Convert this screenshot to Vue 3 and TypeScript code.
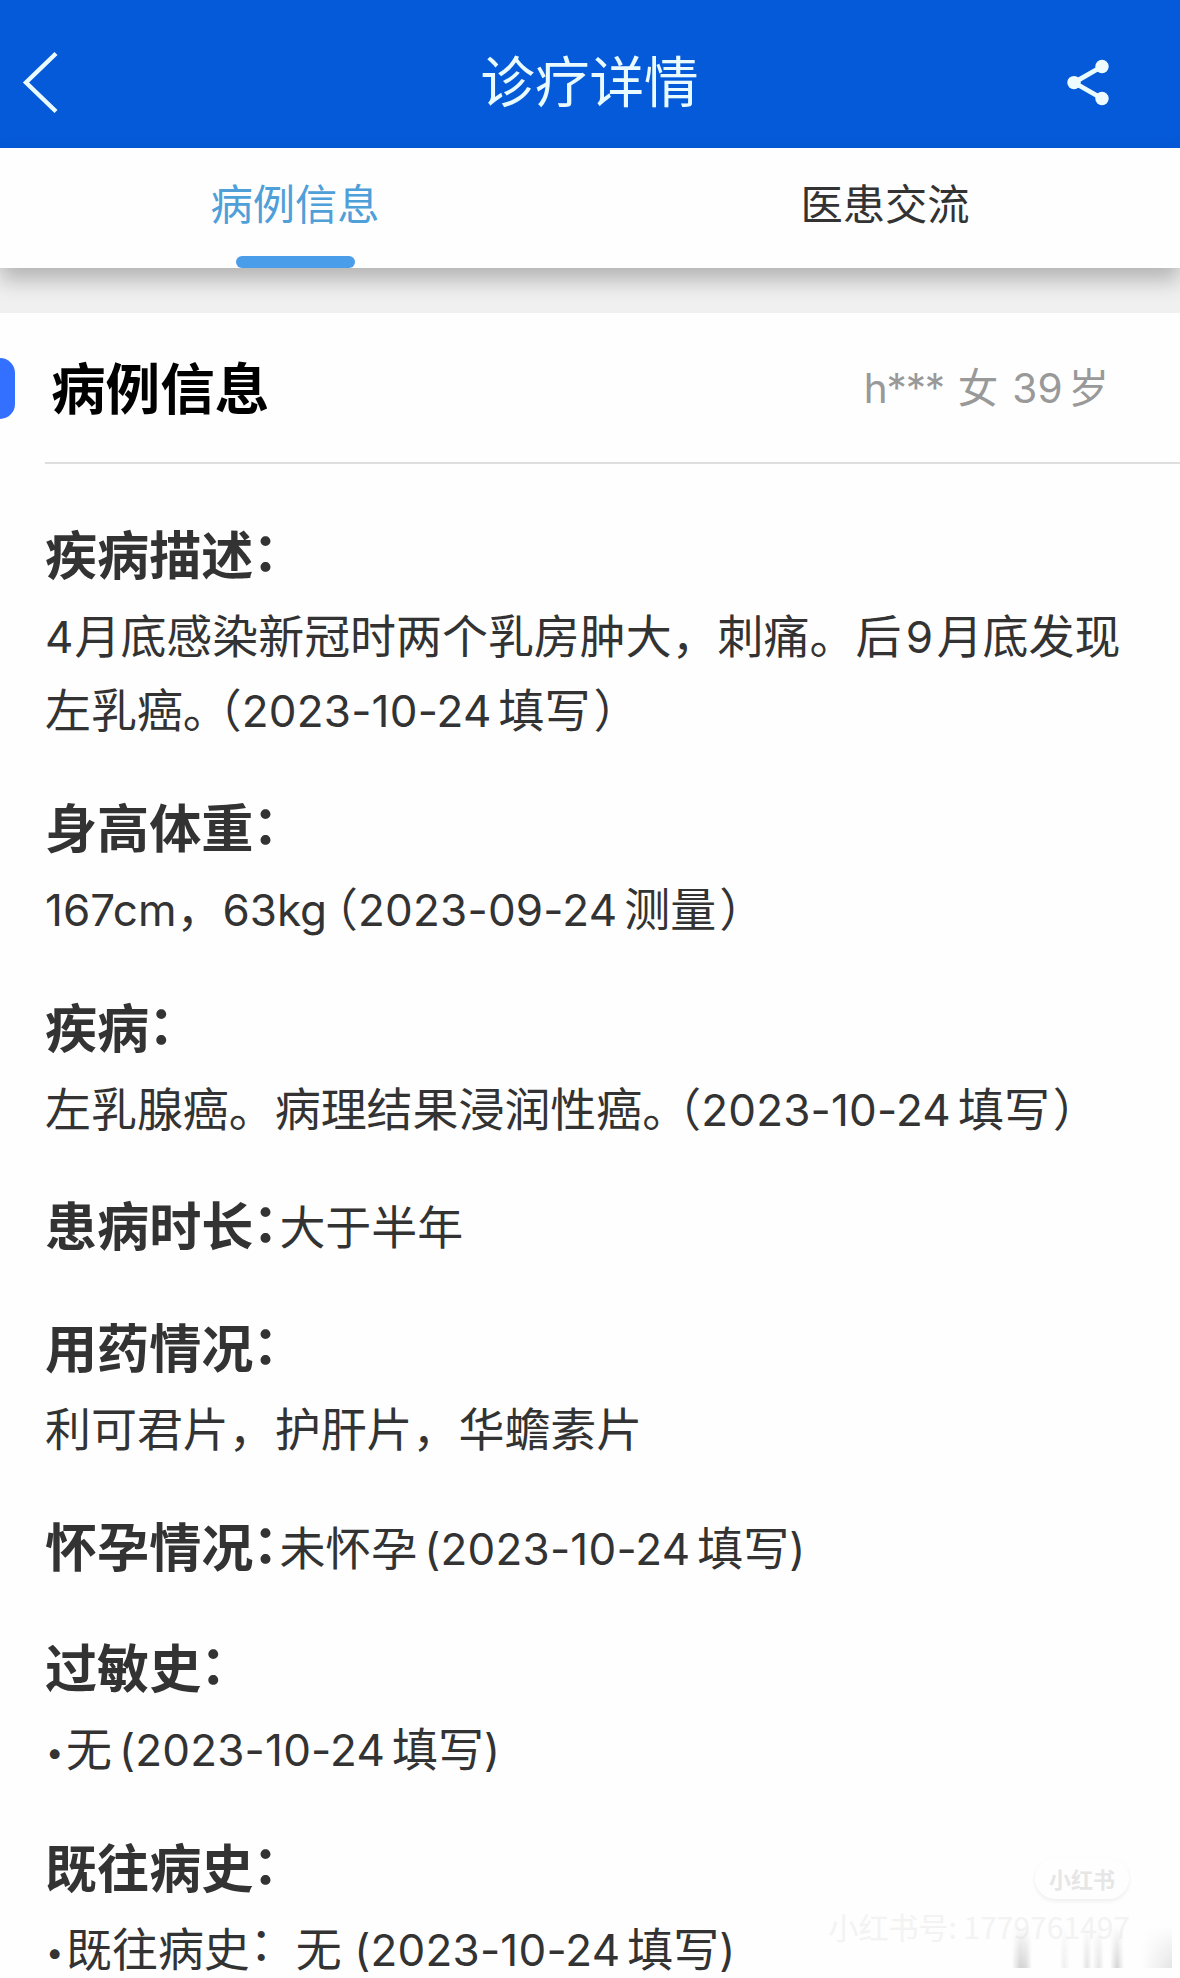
<script setup lang="ts">
type RunKind = 'text' | 'latin' | 'digit' | 'date' | 'spaced' | 'stop' | 'open' | 'close' | 'dot' | 'colon'

interface Run {
  kind: RunKind
  text: string
}

interface RecordItem {
  label: string
  inline?: boolean
  lines: Run[][]
}

const run = (kind: RunKind, value: string): Run => ({ kind, text: value })
const text = (value: string): Run => run('text', value)
const stop = run('stop', '。')
const open = run('open', '（')
const close = run('close', '）')
const dot = run('dot', '•')

const tabs = [
  { name: '病例信息', active: true },
  { name: '医患交流', active: false },
]

const records: RecordItem[] = [
  {
    label: '疾病描述',
    lines: [
      [run('digit', '4'), text('月底感染新冠时两个乳房肿大，刺痛。后'), run('digit', '9'), text('月底发现')],
      [text('左乳癌'), stop, open, run('date', '2023-10-24'), text('填写'), close],
    ],
  },
  {
    label: '身高体重',
    lines: [
      [
        run('latin', '167cm'),
        text('，'),
        run('latin', '63kg'),
        open,
        run('date', '2023-09-24'),
        text('测量'),
        close,
      ],
    ],
  },
  {
    label: '疾病',
    lines: [
      [text('左乳腺癌。病理结果浸润性癌'), stop, open, run('date', '2023-10-24'), text('填写'), close],
    ],
  },
  { label: '患病时长', inline: true, lines: [[text('大于半年')]] },
  { label: '用药情况', lines: [[text('利可君片，护肝片，华蟾素片')]] },
  {
    label: '怀孕情况',
    inline: true,
    lines: [[text('未怀孕'), run('spaced', '(2023-10-24'), text('填写'), run('latin', ')')]],
  },
  {
    label: '过敏史',
    lines: [[dot, text('无'), run('spaced', '(2023-10-24'), text('填写'), run('latin', ')')]],
  },
  {
    label: '既往病史',
    lines: [
      [
        dot,
        text('既往病史'),
        run('colon', '：'),
        text('无'),
        run('date', ' (2023-10-24'),
        text('填写'),
        run('latin', ')'),
      ],
    ],
  },
]
</script>

<template>
  <div class="page">
    <header class="bar">
      <svg class="back" width="111" height="80" viewBox="0 0 111 80" fill="none">
        <path d="M56 11.5 26 40.5 56 69.5" stroke="#e9fbff" stroke-width="4.4" />
      </svg>
      <h1 class="title">诊疗详情</h1>
      <svg class="share" width="46" height="50" viewBox="0 0 46 50">
        <path d="M37 9.5 9 25.6 37 41.5" fill="none" stroke="#e9fbff" stroke-width="4.8" />
        <g fill="#effcff">
          <circle cx="37" cy="9.5" r="6.7" />
          <circle cx="9" cy="25.6" r="6.7" />
          <circle cx="37" cy="41.5" r="6.7" />
        </g>
      </svg>
    </header>

    <nav class="tabs">
      <div v-for="tab in tabs" :key="tab.name" class="tab" :class="{ active: tab.active }">
        <span class="tab-name">{{ tab.name }}</span>
        <i class="tab-line"></i>
      </div>
    </nav>

    <div class="gap"></div>

    <main class="card">
      <div class="card-head">
        <i class="marker"></i>
        <h2 class="card-title">病例信息</h2>
        <div class="patient">
          <span class="masked">h***</span><span>女</span><span class="age">39</span><span>岁</span>
        </div>
      </div>

      <div class="records">
        <section v-for="item in records" :key="item.label" class="record" :class="{ inline: item.inline }">
          <h3 class="label">{{ item.label }}<span class="half">：</span></h3>
          <div class="value">
            <p v-for="(line, n) in item.lines" :key="n" class="line">
              <span v-for="(part, i) in line" :key="i" :class="part.kind">{{ part.text }}</span>
            </p>
          </div>
        </section>
      </div>
    </main>

    <div class="watermark">
      <div class="badge">小红书</div>
      <div class="account">小红书号: 1779761497</div>
      <div class="streaks"></div>
    </div>
  </div>
</template>

<style>
body {
  margin: 0;
  background: #fefefe;
}
</style>

<style scoped>
.page {
  position: relative;
  width: 1180px;
  height: 1978px;
  overflow: hidden;
  background: #fefefe;
  color: #333;
  font-family: 'Noto Sans CJK SC', sans-serif;
  text-spacing-trim: space-all;
}

h1,
h2,
h3,
p {
  margin: 0;
  font-weight: 400;
}

.bar {
  display: flex;
  align-items: center;
  justify-content: space-between;
  box-sizing: border-box;
  height: 148px;
  padding: 16px 69px 0 0;
  background: #055ad9;
}

.back {
  margin-right: 3px;
}

.title {
  margin-top: -7px;
  font-size: 54.6px;
  line-height: 80px;
  color: #e9fbff;
}

.tabs {
  position: relative;
  z-index: 1;
  display: flex;
  height: 120px;
  background: #fefefe;
  box-shadow: 0 12px 20px rgba(0, 0, 0, 0.25);
}

.tab {
  display: flex;
  flex: 1;
  flex-direction: column;
  align-items: center;
  justify-content: space-between;
}

.tab-name {
  padding-top: 24px;
  font-size: 42.3px;
  line-height: 60px;
}

.tab.active .tab-name {
  color: #4f9fd9;
}

.tab-line {
  width: 119px;
  height: 12px;
  border-radius: 6px;
}

.tab.active .tab-line {
  background: #4a9ee9;
}

.gap {
  height: 45px;
  background: #f0f0f0;
}

.card-head {
  display: flex;
  align-items: center;
  box-sizing: border-box;
  height: 149px;
}

.marker {
  width: 15px;
  height: 61px;
  margin: 1px 36px 0 0;
  border-radius: 0 15px 15px 0;
  background: #3370ff;
}

.card-title {
  flex: 1;
  margin-top: -4px;
  font-size: 54.6px;
  font-weight: 700;
  line-height: 80px;
  color: #000;
}

.patient {
  display: flex;
  align-items: baseline;
  margin: 2px 71px 0 0;
  font-family: Inter, 'Noto Sans CJK SC', sans-serif;
  font-size: 40.5px;
  line-height: 60px;
  color: #999;
}

.masked {
  margin-right: 14px;
  letter-spacing: -1.2px;
}

.age {
  margin: 0 6px 0 14px;
}

.records {
  display: flex;
  flex-direction: column;
  gap: 42.5px;
  margin-left: 45px;
  padding-top: 48.5px;
  border-top: 2px solid #dedede;
}

.record {
  display: flex;
  flex-direction: column;
  gap: 3px;
}

.record.inline {
  flex-direction: row;
  align-items: center;
  gap: 0;
  height: 78.4px;
}

.label {
  height: 80px;
  font-size: 52.1px;
  font-weight: 700;
  line-height: 80px;
  white-space: nowrap;
}

.half,
.stop,
.open,
.close {
  font-feature-settings: 'halt';
}

.half {
  position: relative;
  top: -4px;
  left: -1px;
}

.line {
  height: 74px;
  font-size: 45.95px;
  line-height: 74px;
  white-space: nowrap;
}

.latin,
.digit,
.date,
.spaced {
  font-family: Inter, 'Noto Sans CJK SC', sans-serif;
  font-size: 44px;
  line-height: 1;
  white-space: pre;
}

.date,
.spaced {
  margin-right: 7px;
  letter-spacing: 0.2px;
}

.spaced {
  margin-left: 7px;
}

.digit {
  margin: 0 3.5px 0 4.5px;
}

.digit:first-child {
  margin: 0 1px 0 0;
}

.stop + .open {
  margin-left: 13px;
}

.latin + .open {
  margin-left: 8px;
}

.close {
  margin-left: 3px;
}

.colon {
  position: relative;
  top: -6px;
}

.dot {
  display: inline-block;
  width: 21px;
  font-family: Inter, sans-serif;
  font-size: 31px;
  line-height: 1;
  text-indent: 1px;
  transform: translateY(-3px);
}

.watermark {
  position: absolute;
  right: 8px;
  bottom: 10px;
  display: flex;
  flex-direction: column;
  align-items: flex-end;
  width: 380px;
}

.badge {
  width: 94px;
  height: 41px;
  margin-right: 43px;
  border-radius: 21px;
  box-shadow: 0 2px 4px rgba(0, 0, 0, 0.07);
  font-size: 22px;
  font-weight: 700;
  line-height: 41px;
  color: #e6e6e6;
  text-align: center;
}

.account {
  margin: 9px 42px 0 0;
  font-size: 30px;
  line-height: 36px;
  color: #f3f3f3;
  white-space: nowrap;
}

.streaks {
  width: 160px;
  height: 42px;
  margin-top: -18px;
  background:
    linear-gradient(90deg, transparent 130px, #e4e4e4 160px),
    linear-gradient(
      90deg,
      transparent 0,
      #d2d2d2 8px,
      #dadada 14px,
      transparent 20px,
      transparent 48px,
      #eee 52px,
      transparent 58px,
      transparent 70px,
      #e2e2e2 75px,
      transparent 80px,
      #e4e4e4 87px,
      transparent 92px,
      transparent 98px,
      #d4d4d4 105px,
      transparent 112px
    );
  mask-image: linear-gradient(transparent, #000);
}
</style>
